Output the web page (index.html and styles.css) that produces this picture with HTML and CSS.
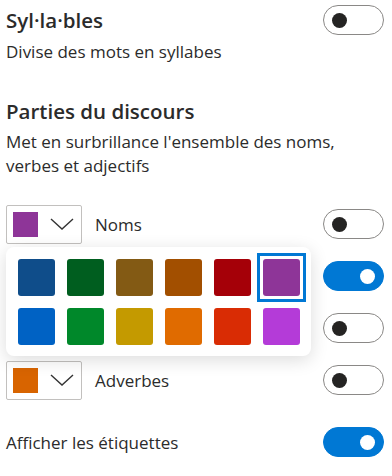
FILE: index.html
```html
<!DOCTYPE html>
<html lang="fr">
  <head>
    <meta charset="UTF-8" />
    <meta name="viewport" content="width=device-width, initial-scale=1.0" />
    <title>Options de grammaire</title>
    <link rel="stylesheet" href="styles.css">
  </head>
  <body>
    <div class="panel">
      <div class="setting-head">
        <h2>Syl·la·bles</h2>
        <button class="toggle"><span class="knob"></span></button>
      </div>
      <p class="desc">Divise des mots en syllabes</p>

      <h2 class="section-title">Parties du discours</h2>
      <p class="desc wide">Met en surbrillance l'ensemble des noms, verbes et adjectifs</p>

      <div class="pos-list">
        <div class="pos-row">
          <button class="color-pick">
            <span class="swatch" style="background: #8e3598"></span>
            <svg width="24" height="12" viewBox="0 0 24 12" fill="none">
              <path d="M1 1l11 10L23 1" stroke="#333" stroke-width="1.4" />
            </svg>
          </button>
          <span class="pos-label">Noms</span>
          <button class="toggle"><span class="knob"></span></button>

          <div class="palette">
            <span class="chip" style="background: #0f4d8a"></span>
            <span class="chip" style="background: #005e1f"></span>
            <span class="chip" style="background: #835a14"></span>
            <span class="chip" style="background: #a24f00"></span>
            <span class="chip" style="background: #a50008"></span>
            <span class="chip selected" style="background: #8e3598"></span>
            <span class="chip" style="background: #0062c4"></span>
            <span class="chip" style="background: #00882a"></span>
            <span class="chip" style="background: #c49a00"></span>
            <span class="chip" style="background: #e06b00"></span>
            <span class="chip" style="background: #d92c04"></span>
            <span class="chip" style="background: #b43bd8"></span>
          </div>
        </div>

        <div class="pos-row">
          <button class="color-pick">
            <span class="swatch" style="background: #d92c04"></span>
            <svg width="24" height="12" viewBox="0 0 24 12" fill="none">
              <path d="M1 1l11 10L23 1" stroke="#333" stroke-width="1.4" />
            </svg>
          </button>
          <span class="pos-label">Verbes</span>
          <button class="toggle on"><span class="knob"></span></button>
        </div>

        <div class="pos-row">
          <button class="color-pick">
            <span class="swatch" style="background: #00882a"></span>
            <svg width="24" height="12" viewBox="0 0 24 12" fill="none">
              <path d="M1 1l11 10L23 1" stroke="#333" stroke-width="1.4" />
            </svg>
          </button>
          <span class="pos-label">Adjectifs</span>
          <button class="toggle"><span class="knob"></span></button>
        </div>

        <div class="pos-row">
          <button class="color-pick">
            <span class="swatch" style="background: #d86400"></span>
            <svg width="24" height="12" viewBox="0 0 24 12" fill="none">
              <path d="M1 1l11 10L23 1" stroke="#333" stroke-width="1.4" />
            </svg>
          </button>
          <span class="pos-label">Adverbes</span>
          <button class="toggle"><span class="knob"></span></button>
        </div>
      </div>

      <div class="setting-head labels">
        <span class="pos-label plain">Afficher les étiquettes</span>
        <button class="toggle on"><span class="knob"></span></button>
      </div>
    </div>
  </body>
</html>
```

FILE: styles.css
```css
* {
  margin: 0;
  padding: 0;
  box-sizing: border-box;
  font-family: "Open Sans", "Noto Sans", sans-serif;
}

body {
  background-color: #fff;
  color: #2b2b2b;
}

.panel {
  padding: 5px 8px 0 6px;
}

.setting-head {
  display: flex;
  justify-content: space-between;
  align-items: center;
  height: 30px;
}

h2 {
  font-size: 20.5px;
  line-height: 28px;
  font-weight: 600;
  color: #2b2b2b;
}

.desc {
  font-size: 17px;
  line-height: 24px;
  margin-top: 5px;
}

.desc.wide {
  padding-right: 40px;
}

.section-title {
  margin-top: 33px;
}

.toggle {
  width: 61px;
  height: 30px;
  border-radius: 15px;
  border: 1px solid #8a8886;
  background: #fff;
  display: flex;
  align-items: center;
  padding-left: 8px;
  flex-shrink: 0;
  cursor: pointer;
}

.knob {
  width: 15px;
  height: 15px;
  border-radius: 50%;
  background: #252423;
}

.toggle.on {
  background: #0078d4;
  border-color: #0078d4;
  justify-content: flex-end;
  padding-right: 8px;
}

.toggle.on .knob {
  background: #fff;
}

.pos-list {
  margin-top: 20px;
}

.pos-row {
  display: flex;
  align-items: center;
  height: 52px;
  position: relative;
}

.color-pick {
  width: 76px;
  height: 39px;
  border: 1px solid #c2c0be;
  border-radius: 2px;
  background: #fff;
  display: flex;
  align-items: center;
  gap: 12px;
  padding-left: 6px;
  flex-shrink: 0;
}

.swatch {
  width: 25px;
  height: 25px;
}

.pos-label {
  font-size: 17px;
  margin-left: 13px;
  flex: 1;
}

.pos-label.plain {
  margin-left: 0;
}

.palette {
  position: absolute;
  top: 49px;
  left: 0;
  width: 305px;
  height: 109px;
  background: #fff;
  border-radius: 8px;
  box-shadow: 0 4px 18px rgba(0, 0, 0, 0.14);
  display: grid;
  grid-template-columns: repeat(6, 37px);
  grid-auto-rows: 37px;
  column-gap: 12px;
  row-gap: 12px;
  padding: 12px 0 0 12px;
  z-index: 2;
}

.chip {
  border-radius: 3px;
  position: relative;
}

.chip.selected::after {
  content: "";
  position: absolute;
  inset: -6px;
  border: 3px solid #0078d4;
}

.labels {
  margin-top: 21px;
}
```
